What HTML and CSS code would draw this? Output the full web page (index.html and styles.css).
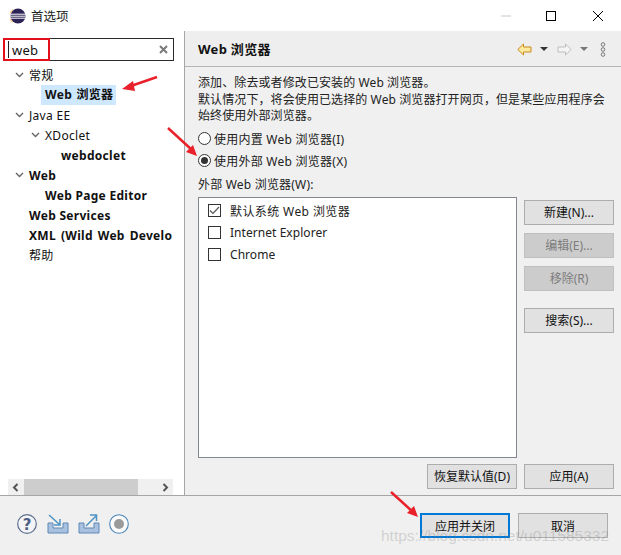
FILE: index.html
```html
<!DOCTYPE html>
<html lang="zh-CN">
<head>
<meta charset="utf-8">
<title>首选项</title>
<link rel="stylesheet" href="styles.css">
</head>
<body>
<div class="dialog">
  <header class="titlebar">
    <svg class="app-logo" width="16" height="16" viewBox="0 0 16 16"><circle cx="8" cy="8" r="7.500" fill="#2c2255"/><path d="M1 6.200h14M.6 8.200h14.800M1 10.200h14" stroke="#fff" stroke-width="1"/><path d="M3 1.500A7.500 7.500 0 0 0 3 14.500" fill="none" stroke="#f7941e" stroke-width=".8"/></svg>
    <span class="title-text">首选项</span>
    <div class="win-controls">
      <span class="win-btn"><svg width="12" height="12" viewBox="0 0 12 12"><path d="M1 6h10" stroke="#c8c8c8"/></svg></span>
      <span class="win-btn"><svg width="12" height="12" viewBox="0 0 12 12"><rect x=".5" y="1.500" width="9" height="9" fill="none" stroke="#000"/></svg></span>
      <span class="win-btn"><svg width="12" height="12" viewBox="0 0 12 12"><path d="M1 1l10 10M11 1L1 11" stroke="#000"/></svg></span>
    </div>
  </header>
  <main class="body">
    <aside class="sidebar">
      <div class="search">
        <span class="caret"></span>
        <span class="search-value">web</span>
        <svg class="search-clear" width="9" height="9" viewBox="0 0 9 9"><path d="M1 1l7 7M8 1L1 8" stroke="#7a7a7a" stroke-width="2"/></svg>
      </div>
      <ul class="tree">
        <li class="row l0"><svg class="chev" width="9" height="6" viewBox="0 0 9 6"><path d="M1 1l3.500 3.500L8 1" fill="none" stroke="#666" stroke-width="1.400"/></svg><span>常规</span></li>
        <li class="row l1 bold"><span class="sel">Web 浏览器</span></li>
        <li class="row l0"><svg class="chev" width="9" height="6" viewBox="0 0 9 6"><path d="M1 1l3.500 3.500L8 1" fill="none" stroke="#666" stroke-width="1.400"/></svg><span>Java EE</span></li>
        <li class="row l0b"><svg class="chev" width="9" height="6" viewBox="0 0 9 6"><path d="M1 1l3.500 3.500L8 1" fill="none" stroke="#666" stroke-width="1.400"/></svg><span>XDoclet</span></li>
        <li class="row l2 bold">webdoclet</li>
        <li class="row l0 bold"><svg class="chev" width="9" height="6" viewBox="0 0 9 6"><path d="M1 1l3.500 3.500L8 1" fill="none" stroke="#666" stroke-width="1.400"/></svg><span>Web</span></li>
        <li class="row l1 bold">Web Page Editor</li>
        <li class="row l00 bold">Web Services</li>
        <li class="row l00 bold clip">XML (Wild Web Develo</li>
        <li class="row l00">帮助</li>
      </ul>
      <div class="hscroll">
        <svg width="8" height="9" viewBox="0 0 8 9"><path d="M5.500 1L2 4.500 5.500 8" fill="none" stroke="#555" stroke-width="2"/></svg>
        <span class="hthumb"></span>
        <svg width="8" height="9" viewBox="0 0 8 9"><path d="M2.500 1L6 4.500 2.500 8" fill="none" stroke="#555" stroke-width="2"/></svg>
      </div>
    </aside>
    <section class="content">
      <div class="content-head">
        <h1 class="page-title">Web 浏览器</h1>
        <div class="nav-tools">
          <svg width="15" height="13" viewBox="0 0 15 13"><path d="M.8 6.500L6.500 1v3h7.500v5H6.500v3z" fill="#fde9a0" stroke="#c98a1a"/></svg>
          <span class="tri dark"></span>
          <svg class="nav-fwd" width="15" height="13" viewBox="0 0 15 13"><path d="M14.200 6.500L8.500 1v3H1v5h7.500v3z" fill="#f4f4f4" stroke="#bdbdbd"/></svg>
          <span class="tri"></span>
          <svg class="nav-more" width="6" height="15" viewBox="0 0 6 15"><g fill="none" stroke="#777"><circle cx="3" cy="2.500" r="1.800"/><circle cx="3" cy="7.500" r="1.800"/><circle cx="3" cy="12.500" r="1.800"/></g></svg>
        </div>
      </div>
      <div class="content-body">
        <p class="desc">添加、除去或者修改已安装的 Web 浏览器。<br>默认情况下，将会使用已选择的 Web 浏览器打开网页，但是某些应用程序会<br>始终使用外部浏览器。</p>
        <div class="radios">
          <label class="radio"><span class="radio-dot"></span>使用内置 Web 浏览器(I)</label>
          <label class="radio"><span class="radio-dot on"></span>使用外部 Web 浏览器(X)</label>
        </div>
        <div class="list-label">外部 Web 浏览器(W):</div>
        <div class="list-area">
          <ul class="browser-list">
            <li class="browser"><span class="check"><svg width="11" height="9" viewBox="0 0 11 9"><path d="M1 4.500l3 3 6-6.500" fill="none" stroke="#555" stroke-width="1.200"/></svg></span>默认系统 Web 浏览器</li>
            <li class="browser latin"><span class="check"></span>Internet Explorer</li>
            <li class="browser latin"><span class="check"></span>Chrome</li>
          </ul>
          <div class="side-btns">
            <button class="btn">新建(N)...</button>
            <button class="btn off">编辑(E)...</button>
            <button class="btn off">移除(R)</button>
            <button class="btn gap">搜索(S)...</button>
          </div>
        </div>
        <div class="restore-row">
          <button class="btn restore">恢复默认值(D)</button>
          <button class="btn apply">应用(A)</button>
        </div>
      </div>
    </section>
  </main>
  <footer class="footer">
    <div class="foot-icons">
      <svg class="help-icon" width="20" height="20" viewBox="0 0 20 20"><circle cx="10" cy="10" r="9.300" fill="#f4f4f6" stroke="#5c6f8f" stroke-width="1.200"/><text x="10" y="15.500" class="qmark" text-anchor="middle">?</text></svg>
      <svg width="22" height="20" viewBox="0 0 22 20"><path d="M1 9h5v5h10V9h5v10H1z" fill="#a9c1df" stroke="#5f88b8"/><path d="M2 1l10 9M13 5v6H7" fill="none" stroke="#4d93c4" stroke-width="1.500"/></svg>
      <svg width="22" height="20" viewBox="0 0 22 20"><path d="M1 9h5v5h10V9h5v10H1z" fill="#a9c1df" stroke="#5f88b8"/><path d="M8 12L18 2M12 1h6.500v6" fill="none" stroke="#4d93c4" stroke-width="1.500"/></svg>
      <svg width="20" height="20" viewBox="0 0 20 20"><circle cx="10" cy="10" r="9.300" fill="#fafafa" stroke="#4a86b8" stroke-width="1.100"/><circle cx="10" cy="10" r="5" fill="#9a9a9a"/></svg>
    </div>
    <div class="foot-btns">
      <button class="btn primary">应用并关闭</button>
      <button class="btn cancel">取消</button>
    </div>
  </footer>

  <span class="search-mark"></span>
  <svg class="arrows" width="621" height="555" viewBox="0 0 621 555">
    <g fill="#e8212b" stroke="#e8212b" stroke-width="2.500">
      <path d="M157 77L128 87"/><path stroke="none" d="M122 89l11-8 2 10z"/>
      <path d="M168 128L192 150"/><path stroke="none" d="M197 156l-11-4 7-7z"/>
      <path d="M391 492L413 512"/><path stroke="none" d="M418 517l-11-4 7-7z"/>
    </g>
  </svg>
  <span class="watermark">https://blog.csdn.net/u011585332</span>
</div>
</body>
</html>
```
FILE: styles.css
```css
* { box-sizing: border-box; }
html, body { margin: 0; padding: 0; }
body { width: 621px; height: 555px; overflow: hidden; background: #f0f0f0; font-family: "Noto Sans", "Noto Sans CJK SC", sans-serif; font-size: 12px; color: #111; }
ul { list-style: none; margin: 0; padding: 0; }
p, h1 { margin: 0; }
.dialog { position: relative; width: 621px; height: 555px; display: flex; flex-direction: column; }

.titlebar { height: 31px; flex: none; background: #fff; display: flex; align-items: center; padding-left: 10px; }
.title-text { margin-left: 5px; font-size: 12.500px; color: #222; }
.win-controls { margin-left: auto; display: flex; }
.win-btn { width: 46px; height: 31px; display: flex; align-items: center; justify-content: center; }

.body { flex: none; height: 465px; display: flex; border-bottom: 1px solid #a6a6a6; }
.sidebar { width: 185px; flex: none; background: #fff; border-right: 1px solid #a6a6a6; display: flex; flex-direction: column; padding-top: 7px; }
.search { margin-left: 3px; width: 171px; height: 23px; border: 1px solid #2b2b2b; display: flex; align-items: center; padding: 0 5px 0 4px; font-size: 13px; }
.caret { width: 1px; height: 17px; background: #222; margin-right: 3px; }
.search-value { letter-spacing: .2px; }
.search-clear { margin-left: auto; }
.tree { margin-top: 4px; flex: 1; }
.row { height: 20px; display: flex; align-items: center; white-space: nowrap; letter-spacing: .3px; }
.row.bold { font-weight: 700; }
.chev { flex: none; margin-right: 5px; }
.l0 { padding-left: 15px; }
.l00 { padding-left: 29px; }
.l0b { padding-left: 31px; }
.l1 { padding-left: 45px; }
.l2 { padding-left: 61px; }
.sel { background: #cde8ff; margin-left: -4px; padding: 0 3px 0 4px; line-height: 20px; height: 20px; word-spacing: 1px; }
.clip { width: 174px; overflow: hidden; word-spacing: 1.500px; }
.hscroll { height: 16px; margin: 0 11px 0 8px; background: #f0f0f0; display: flex; align-items: center; justify-content: space-between; padding: 0 4px; }
.hthumb { width: 114px; height: 16px; background: #cdcdcd; margin-left: 4px; margin-right: auto; }

.content { flex: 1; min-width: 0; display: flex; flex-direction: column; }
.content-head { height: 36px; flex: none; display: flex; align-items: center; padding: 0 15px 0 13px; border-bottom: 1px solid #b4b4b4; background: #eeeeee; }
.page-title { font-size: 13px; font-weight: 700; letter-spacing: .3px; }
.nav-tools { margin-left: auto; display: flex; align-items: center; gap: 8px; padding-top: 1px; }
.nav-fwd { margin-left: 1px; }
.nav-more { margin-left: 4px; }
.tri { width: 0; height: 0; border-left: 4px solid transparent; border-right: 4px solid transparent; border-top: 4px solid #777; }
.tri.dark { border-top-color: #333; }

.content-body { flex: 1; padding: 8px 7px 6px 13px; display: flex; flex-direction: column; }
.desc { line-height: 16.500px; font-size: 12px; letter-spacing: .1px; color: #222; }
.radios { margin-top: 3px; display: flex; flex-direction: column; }
.radio { height: 22px; display: flex; align-items: center; gap: 3px; letter-spacing: .25px; color: #222; }
.radio-dot { width: 13px; height: 13px; border: 1px solid #333; border-radius: 50%; background: #fff; flex: none; display: flex; align-items: center; justify-content: center; }
.radio-dot.on::after { content: ""; width: 7px; height: 7px; border-radius: 50%; background: #333; }
.list-label { height: 25px; display: flex; align-items: center; letter-spacing: .2px; color: #222; }
.list-area { display: flex; gap: 7px; height: 261px; }
.browser-list { width: 319px; background: #fff; border: 1px solid #828790; padding: 2px 0 0 9px; }
.browser { height: 22px; display: flex; align-items: center; gap: 9px; letter-spacing: .4px; color: #222; }
.browser.latin { letter-spacing: .05px; }
.check { width: 13px; height: 13px; border: 1px solid #333; background: #fff; flex: none; display: flex; align-items: center; justify-content: center; }
.side-btns { width: 90px; display: flex; flex-direction: column; gap: 8px; padding-top: 3px; }
.btn { font: inherit; color: #111; background: #e1e1e1; border: 1px solid #adadad; height: 25px; padding: 0; }
.btn.off { background: #cccccc; border-color: #bfbfbf; color: #7c7c7c; }
.btn.gap { margin-top: 9px; }
.restore-row { display: flex; justify-content: flex-end; gap: 7px; margin-top: 6px; }
.restore { width: 90px; }
.apply { width: 90px; }

.footer { flex: 1; display: flex; align-items: flex-start; padding: 17px 13px 0 17px; background: #f0f0f0; }
.foot-icons { display: flex; align-items: center; gap: 9px; margin-top: 1px; }
.help-icon { margin-right: 1px; }
.qmark { font-family: "DejaVu Sans", sans-serif; font-weight: 700; font-size: 15px; fill: #4c6086; }
.foot-btns { margin-left: auto; display: flex; gap: 8px; }
.primary { width: 90px; border: 2px solid #0078d7; }
.cancel { width: 90px; }

.search-mark { position: absolute; left: 3px; top: 38px; width: 47px; height: 23px; border: 2px solid #e3101c; pointer-events: none; }
.arrows { position: absolute; left: 0; top: 0; pointer-events: none; }
.watermark { position: absolute; left: 381px; top: 527px; font-family: "Liberation Sans", sans-serif; font-size: 15.500px; color: rgba(130,130,130,.3); white-space: nowrap; pointer-events: none; }
```
